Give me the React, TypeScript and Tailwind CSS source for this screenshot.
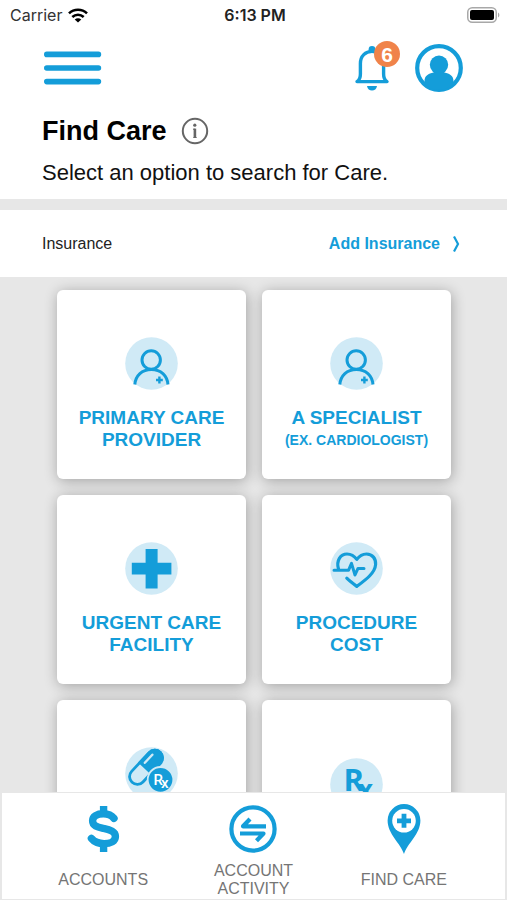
import type { ReactNode } from "react";

interface CareOption {
  id: string;
  lines: string[];
  note?: string;
  icon: ReactNode;
  labelHeight: string;
}

interface NavItem {
  label: string;
  icon: ReactNode;
}

const ONE_LINE = "min-h-[22px]";
const TWO_LINES = "min-h-[44px]";

function WifiIcon() {
  return (
    <svg width="20" height="15" viewBox="0 0 20 15" fill="none" stroke="#000" strokeWidth="2.6" aria-hidden="true">
      <path d="M1 5.4C6 .6 14 .6 19 5.4" />
      <path d="M4.3 9C7.6 6 12.4 6 15.7 9" />
      <path d="M10 14.6L6.7 11.4C8.6 9.8 11.4 9.8 13.3 11.4Z" fill="#000" stroke="none" />
    </svg>
  );
}

function BatteryIcon() {
  return (
    <svg width="33" height="16" viewBox="0 0 33 16" aria-hidden="true">
      <rect x="0.75" y="0.75" width="28.5" height="14.5" rx="4.5" fill="#fff" stroke="#a8a8a8" strokeWidth="1.5" />
      <rect x="3" y="3" width="24" height="10" rx="2" fill="#000" />
      <path d="M31 5.5c1.8.8 1.8 4.2 0 5z" fill="#a8a8a8" />
    </svg>
  );
}

function MenuIcon() {
  return (
    <svg width="58" height="34" viewBox="0 0 58 34" stroke="#149dd9" strokeWidth="5.6" strokeLinecap="round" aria-hidden="true">
      <path d="M2.8 3.4H54.4M2.8 17H54.4M2.8 30.6H54.4" />
    </svg>
  );
}

function BellIcon() {
  return (
    <svg width="36" height="46" viewBox="0 0 36 46" fill="none" aria-hidden="true">
      <circle cx="18" cy="4.4" r="3.4" fill="#149dd9" />
      <path
        d="M3 36.6C5.6 35 6.4 33 6.4 29V18.5C6.4 11 11.5 6.4 18 6.4S29.6 11 29.6 18.5V29C29.6 33 30.4 35 33 36.6Z"
        stroke="#149dd9"
        strokeWidth="3.4"
        strokeLinejoin="round"
      />
      <path d="M13 41H23C22.5 44.2 20.5 45.4 18 45.4S13.5 44.2 13 41Z" fill="#149dd9" />
    </svg>
  );
}

function ProfileIcon() {
  return (
    <svg width="48" height="48" viewBox="0 0 48 48" aria-hidden="true">
      <circle cx="24" cy="24" r="21.8" fill="#fff" stroke="#149dd9" strokeWidth="4.2" />
      <circle cx="24" cy="20.8" r="9.2" fill="#149dd9" />
      <path d="M9.5 40V37C9.5 32 13.5 29.4 18.5 28.6L20 26H28L29.5 28.6C34.5 29.4 38.5 32 38.5 37V40C34 44 29 46 24 46S14 44 9.5 40Z" fill="#149dd9" />
    </svg>
  );
}

function InfoIcon() {
  return (
    <svg width="28" height="28" viewBox="0 0 28 28" fill="none" aria-hidden="true">
      <circle cx="14" cy="14" r="12.2" stroke="#666" strokeWidth="2" />
      <circle cx="13.8" cy="8.2" r="1.6" fill="#666" />
      <path d="M13.9 11.6V21" stroke="#666" strokeWidth="2.6" />
      <path d="M12 12.2H14M12.4 20.5H15.6" stroke="#666" strokeWidth="1" />
    </svg>
  );
}

function Disc({ children }: { children: ReactNode }) {
  return (
    <svg width="53" height="53" viewBox="0 0 53 53" fill="none" className="shrink-0" aria-hidden="true">
      <circle cx="26.5" cy="26.5" r="26.3" fill="#d0eaf6" />
      {children}
    </svg>
  );
}

function PersonIcon() {
  return (
    <Disc>
      <g stroke="#149dd9" strokeWidth="3">
        <circle cx="26.2" cy="23" r="9.2" />
        <path d="M9.8 47.5C10.6 38.5 17 32.4 26.4 32.4S42.2 38.5 43 47.5" />
        <path d="M31 43H37.8M34.4 39.6V46.4" strokeWidth="2.4" />
      </g>
    </Disc>
  );
}

function CrossIcon() {
  return (
    <Disc>
      <path d="M20.6 7H32.6V20.8H46.4V32.4H32.6V46.6H20.6V32.4H6.8V20.8H20.6Z" fill="#149dd9" />
    </Disc>
  );
}

function HeartIcon() {
  return (
    <Disc>
      <g stroke="#149dd9" strokeWidth="3.2" strokeLinecap="round" strokeLinejoin="round">
        <path d="M8.5 27C6 18.5 10.5 12 17 12C21.5 12 24.6 14.4 26.8 17.4C29 14.4 32.3 12 36.5 12C42.5 12 46 16.8 45.6 22.5C45 31 36 37.5 26.8 44.4C23 41.6 19.6 39 16.8 36.2" />
        <path d="M4 28.2H18.6L21.5 21.4L25 33L28 26.4H34" strokeWidth="3" />
      </g>
    </Disc>
  );
}

function PillIcon() {
  return (
    <Disc>
      <g transform="rotate(-47 20.5 20.5)">
        <rect x="0.5" y="13" width="41" height="15.5" rx="7.7" fill="#d0eaf6" stroke="#149dd9" strokeWidth="2.8" />
        <path d="M19 11.7H34A9 9 0 0 1 34 29.8H19Z" fill="#149dd9" />
        <path d="M23.5 16.8H34.5" stroke="#d0eaf6" strokeWidth="2.4" strokeLinecap="round" />
      </g>
      <circle cx="35.5" cy="32.8" r="12.8" fill="#149dd9" stroke="#d0eaf6" strokeWidth="1.8" />
      <text x="28.6" y="38" fontSize="15" fill="#fff" fontFamily="Roboto, sans-serif" fontWeight="500">
        R<tspan dx="-2" dy="3">x</tspan>
      </text>
    </Disc>
  );
}

function RxIcon() {
  return (
    <Disc>
      <text x="13.6" y="33" fontSize="31" fill="#149dd9" fontFamily="'Open Sans', sans-serif" fontWeight="700">
        R<tspan dx="-6" dy="8" fontSize="26">x</tspan>
      </text>
    </Disc>
  );
}

function DollarIcon() {
  return (
    <svg width="34" height="48" viewBox="0 0 34 48" fill="none" stroke="#149dd9" aria-hidden="true">
      <path d="M17.6 1V10M17.6 38V47" strokeWidth="7.4" />
      <path
        d="M28 13.4C25.5 10.2 21.5 8.8 17.4 8.8C11 8.8 6.6 11.4 6.6 15.7C6.6 21 11.6 22 17.6 23.4C24.6 24.8 29.4 26.5 29.4 31.4C29.4 36.2 24.6 38.6 18.1 38.6C12.6 38.6 8.1 36.8 5.4 33.4"
        strokeWidth="7.4"
        strokeLinecap="round"
      />
    </svg>
  );
}

function ActivityIcon() {
  return (
    <svg width="48" height="48" viewBox="0 0 48 48" fill="none" stroke="#149dd9" aria-hidden="true">
      <circle cx="24" cy="24" r="21.6" strokeWidth="4.2" />
      <path d="M37 21.3H14L21 14M11 28.5H34.5L27.5 35.8" strokeWidth="4.2" strokeLinejoin="round" />
    </svg>
  );
}

function PinIcon() {
  return (
    <svg width="34" height="50" viewBox="0 0 34 50" aria-hidden="true">
      <path d="M17 50C13.5 39 .6 30 .6 16.5A16.4 16.4 0 0 1 33.4 16.5C33.4 30 20.5 39 17 50Z" fill="#149dd9" />
      <circle cx="17" cy="16.8" r="11.8" fill="#fff" />
      <path d="M10 16.8H24M17 9.8V23.8" stroke="#149dd9" strokeWidth="4.8" />
    </svg>
  );
}

const OPTIONS: CareOption[] = [
  { id: "primary", lines: ["PRIMARY CARE", "PROVIDER"], icon: <PersonIcon />, labelHeight: TWO_LINES },
  { id: "specialist", lines: ["A SPECIALIST"], note: "(EX. CARDIOLOGIST)", icon: <PersonIcon />, labelHeight: TWO_LINES },
  { id: "urgent", lines: ["URGENT CARE", "FACILITY"], icon: <CrossIcon />, labelHeight: TWO_LINES },
  { id: "procedure", lines: ["PROCEDURE", "COST"], icon: <HeartIcon />, labelHeight: TWO_LINES },
  { id: "drug", lines: [], icon: <PillIcon />, labelHeight: TWO_LINES },
  { id: "pharmacy", lines: [], icon: <RxIcon />, labelHeight: ONE_LINE },
];

const NAV_ITEMS: NavItem[] = [
  { label: "ACCOUNTS", icon: <DollarIcon /> },
  { label: "ACCOUNT ACTIVITY", icon: <ActivityIcon /> },
  { label: "FIND CARE", icon: <PinIcon /> },
];

function CareTile({ option }: { option: CareOption }) {
  return (
    <button
      type="button"
      className="flex aspect-square flex-col items-center justify-center gap-[17px] rounded-md bg-white pt-[18px] text-[19px] leading-[22px] font-bold text-[#149dd9] shadow-[1px_2px_14px_rgba(0,0,0,0.3)]"
    >
      {option.icon}
      <span className={`flex flex-col items-center ${option.labelHeight}`}>
        {option.lines.map((line) => (
          <span key={line}>{line}</span>
        ))}
        {option.note && <span className="text-sm leading-[22px]">{option.note}</span>}
      </span>
    </button>
  );
}

export default function App() {
  return (
    <div className="flex h-screen flex-col overflow-hidden bg-[#e7e7e7] font-['Liberation_Sans',Arial,sans-serif] text-black">
      <header className="bg-white pb-3">
        <div className="grid h-[30px] grid-cols-3 items-center pr-[7px] pl-2.5 font-['Inter',sans-serif] text-base">
          <div className="flex items-center gap-1.5 text-[#333]">
            <span>Carrier</span>
            <WifiIcon />
          </div>
          <div className="text-center font-semibold text-[#222]">6:13 PM</div>
          <div className="flex justify-end">
            <BatteryIcon />
          </div>
        </div>

        <div className="flex items-center justify-between px-11 pt-3.5">
          <button type="button" aria-label="Menu">
            <MenuIcon />
          </button>
          <div className="flex items-center gap-[25px]">
            <button type="button" aria-label="Notifications" className="relative">
              <BellIcon />
              <span className="absolute -top-1 -right-2.5 flex size-[26px] items-center justify-center rounded-full bg-[#f0834a] text-[21px] leading-none font-bold text-white">
                6
              </span>
            </button>
            <button type="button" aria-label="Profile">
              <ProfileIcon />
            </button>
          </div>
        </div>

        <div className="px-[42px] pt-[23px]">
          <div className="flex items-center gap-3.5">
            <h1 className="text-[27px] leading-8 font-bold">Find Care</h1>
            <button type="button" aria-label="About Find Care">
              <InfoIcon />
            </button>
          </div>
          <p className="pt-3 text-[22px] leading-7 text-[#111]">Select an option to search for Care.</p>
        </div>
      </header>

      <section className="mt-[11px] flex h-[67px] shrink-0 items-center justify-between bg-white pr-[46px] pl-[42px] text-base">
        <span className="text-[#222]">Insurance</span>
        <a href="#insurance" className="flex items-center gap-3 font-bold text-[#149dd9]">
          Add Insurance
          <svg width="9" height="16" viewBox="0 0 9 16" fill="none" stroke="#149dd9" strokeWidth="2.2" aria-hidden="true">
            <path d="M2 .5L6 8L2 15.5" />
          </svg>
        </a>
      </section>

      <main className="min-h-0 flex-1 overflow-y-auto [scrollbar-width:none]">
        <div className="grid grid-cols-2 gap-4 pt-[13px] pr-14 pb-4 pl-[57px]">
          {OPTIONS.map((option) => (
            <CareTile key={option.id} option={option} />
          ))}
        </div>
      </main>

      <nav className="mx-px grid shrink-0 grid-cols-3 border border-[#e7e7e7] bg-white px-[26px] pt-2.5">
        {NAV_ITEMS.map((item) => (
          <a key={item.label} href="#nav" className="flex flex-col items-center gap-1.5 text-center text-[#757575]">
            <span className="flex h-[52px] items-center">{item.icon}</span>
            <span className="flex h-[38px] w-24 items-center justify-center text-base leading-[18px]">{item.label}</span>
          </a>
        ))}
      </nav>
    </div>
  );
}
